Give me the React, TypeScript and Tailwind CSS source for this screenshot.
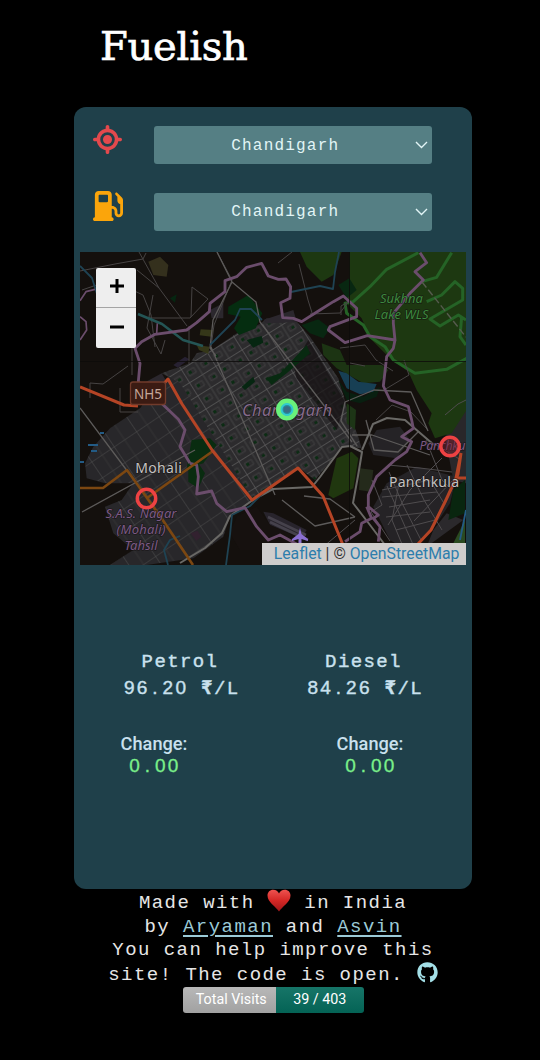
import type { ReactNode } from "react";
import { FaGithub } from "react-icons/fa";
import { FaGasPump, FaLocationCrosshairs } from "react-icons/fa6";

const MONO = "font-['Liberation_Mono',monospace]";

function CitySelect({ icon, city }: { icon: ReactNode; city: string }) {
  return (
    <div className="flex h-[38px] items-start">
      <div className="w-[60.5px]">{icon}</div>
      <button className="flex h-[38px] w-[278.5px] items-center justify-center rounded-[3px] bg-[#557f84] pr-1 text-[#e2f5f6]">
        <span className={`${MONO} grow pt-px pl-[2px] text-center text-[16px] tracking-[1.2px]`}>{city}</span>
        <svg width="13" height="8" viewBox="0 0 13 8" fill="none" stroke="currentColor" strokeWidth="1.4">
          <path d="M1 1 6.5 6.6 12 1" />
        </svg>
      </button>
    </div>
  );
}

function CityMap() {
  return (
    <svg className="block" width="386" height="313" viewBox="80 252 386 313" fill="none" strokeLinejoin="round">
      <defs>
        <pattern id="blocks" width="31" height="15.500" patternUnits="userSpaceOnUse" patternTransform="translate(207 353) rotate(-32)">
          <path d="M0 0H31M0 0V15.500" stroke="#5c5b5c" strokeWidth="1.400" />
          <path d="M16 0V15.500" stroke="#4a494a" strokeWidth=".8" />
          <path d="M4 5h8v5.500H4zM20 5h7v5.500h-7z" stroke="#464547" strokeWidth=".7" />
          <path d="M5 6h3v3H5zM23 7h3v2.500h-3z" fill="#0a2c12" />
        </pattern>
        <pattern id="suburb" width="27" height="19" patternUnits="userSpaceOnUse" patternTransform="translate(103 431) rotate(-34)">
          <path d="M0 0H27M0 0V19" stroke="#4c4b4c" strokeWidth="1.1" />
          <path d="M13 0V19" stroke="#3a393a" strokeWidth=".7" />
        </pattern>
      </defs>
      <rect x="80" y="252" width="386" height="313" fill="#14100d" />

      <g transform="translate(80 250) scale(.33333)">
        {/* built-up areas */}
        <path id="west" d="M15 640 40 590 90 535 180 475 265 380 310 400 520 750 450 800 430 860 340 925 200 945 90 945 160 900 100 850 75 770 125 750 160 700 75 700 20 685Z" fill="#28272a" />
        <path d="M15 640 40 590 90 535 180 475 265 380 310 400 520 750 450 800 430 860 340 925 200 945 90 945 160 900 100 850 75 770 125 750 160 700 75 700 20 685Z" />
        <path d="M245 370 330 340 350 310 395 300 470 250 540 222 560 205 650 215 690 260 775 385 800 470 835 560 845 595 790 588 705 690 655 652 520 750 300 400Z" fill="#2c2b2d" />
        <path d="M390 180 430 160 430 205 395 205ZM550 210 640 180 650 215 560 220ZM190 400 245 370 260 395 215 420Z" fill="#2b272d" />
        <path d="M865 580 890 540 960 530 990 570 950 625 880 615ZM880 770 920 700 1010 650 1130 680 1110 760 1050 850 980 900 930 870Z" fill="#252326" />
        <path d="M1095 560 1160 470V700L1120 690Z" fill="#29272a" />
        <path d="M1060 840 1100 790 1150 810 1040 890Z" fill="#2b292c" />
        <path d="M550 785 580 790 680 840 665 865 570 825Z" fill="#28242c" />
      </g>
      <path d="M85 463 93 447 110 428 140 408 168 377 183 383 253 500 230 517 223 537 193 558 147 565H110L133 550 113 533 105 507 122 500 133 483 105 483 87 478Z" fill="url(#suburb)" />
      <path d="M162 373 190 363 197 353 212 350 237 333 260 324 297 322 310 337 338 378 347 407 358 437 361 448 343 446 315 480 298 467 253 500 180 383Z" fill="url(#blocks)" />

      <g transform="translate(80 250) scale(.33333)">
        <path d="m640 345 45-75 110 185-25 85-120-155z" fill="#151112" opacity=".7" />

        {/* forest and parks */}
        <path d="M660 6 680 50 725 95 760 75 785 6ZM808 6H1160V480L1115 550 1065 565 1045 520 1055 490 1010 420 985 365 930 325 870 265 845 205 805 165 800 130 808 90Z" fill="#1d3811" />
        <path d="M725 280 780 300 800 345 905 345 925 360 900 395 850 400 770 355 730 315Z" fill="#1c3413" />
        <path d="M665 225 715 208 750 235 730 265 690 250ZM775 105 808 85 830 120 800 145Z" fill="#082711" />
        <path d="M558 385 600 370 680 285 690 310 620 370 575 405Z" fill="#082a11" />
        <path d="M775 390 800 425 850 440 900 410 890 440 840 460 800 450Z" fill="#081f10" />
        <path d="M775 362 800 370 835 395 890 402 880 425 840 433 800 415Z" fill="#173f54" />
        <path d="m800 460 28 20-3 60-25-20z" fill="#1d3516" />
        <g stroke="#256326" strokeWidth="9">
          <path d="M1015 8 920 58 870 110 820 155 795 160 800 190 850 225 870 260 915 290 940 330 1005 370 1100 358 1160 325" />
          <path d="M1115 8 1070 82 1025 95M1040 155 1085 135 1125 95 1148 115 1148 150 1050 207 1080 228 1135 195 1158 210M1158 285 1140 260 1145 200" />
        </g>
        <path d="m445 170 60-35 42 55-20 45-50 20-15-20 20-35-38-8z" fill="#052d10" />
        <path d="m205 35 35-15 25 25-5 35-40-5z" fill="#34301d" />
        <path d="m362 238 38 2-6 20-35-4zM350 285l38 5-3 22-28-12z" fill="#353719" />
        <path d="m270 145 20-12-5 25zM500 270l45-12 5 20-30 15zM485 410l35-30 5 15-30 25z" fill="#062611" />
        <path d="m280 345 35-25 13 8-35 25z" fill="#272131" />
        <path d="m335 570 55-5 20 20-40 55-50 15zM325 620l30 20 20 30-20 45-30-20z" fill="#092c10" />
        <path d="m332 850 20-8 12 18-15 12z" fill="#32212f" />
        <path d="M470 800 530 770 570 825 650 860 640 900H480L450 850Z" fill="#16110f" />
        <path d="m770 625 45-20 20 20-15 90-60 30-15-10z" fill="#20370f" />
        <path d="m840 655 40 5-8 65-35-5z" fill="#242a1b" />
        <path d="m1120 720 35-30v100l-50 20z" fill="#09260f" />
        <path d="m1120 880 35-70v70z" fill="#2a4a20" />
      </g>

      {/* minor roads */}
      <g stroke="#464343" strokeWidth="1">
        <path d="M139 252 159 288 187 326M217 252 232 280 214 325 211 347M80 271 115 264 143 259 146 253M148 318H190L208 299 192 287 191 317M159 288 137 270M82 290 111 280 143 295 151 315 155 347M132 330v45M189 326v38M90 383 103 384 128 366M90 383V398M120 388v24h18M153 295 147 328 161 354 165 340M299 264 308 300 313 316M292 252 278 263M310 314 340 313 348 302 341 306V315M340 348 365 345 376 360 393 371M384 390 409 375 404 360M376 420 392 405 411 412 427 429M350 363 365 366" />
      </g>
      <g stroke="#5d5b5a" strokeWidth="1.3">
        <path d="M217 252 232 282 213 320 210 348 216 356M232 282 256 302 260 322 352 442M211 347 275 495M80 408 134 480M82 512 195 450" />
        <path d="M355 517 330 499 304 496M282 500 315 526 355 517M357 446 341 421 345 402 374 390 411 392 428 431M352 435H372L430 455M366 420 374 450 398 452 418 432" />
      </g>
      <g stroke="#4f4c4e" strokeWidth="1">
        <path d="M382 490 430 480 445 505M389 507 430 500M396 530 435 520M389 472 403 505 421 540M407 465 424 500 442 530M426 440 442 480 452 490M387 486 415 549M372 480 382 505 371 512 390 541M442 458 410 490 388 525M455 478 414 521M388 465 420 468 452 472M400 478 392 520 404 549M382 497 437 492M386 517 430 512M428 440 461 460M445 415 458 404 466 400M303 564 355 520" />
      </g>
      <path d="M180 563 205 548 222 533 230 516 253 500 273 489 312 487 320 477 342 447 350 446 362 452 358 476 353 503 370 525 385 545M362 450 373 424 387 418 405 420 434 445" stroke="#6a6966" strokeWidth="2" />
      <path d="m268 517 38 18m-36-13 38 18" stroke="#45414b" strokeWidth="2.500" />

      {/* water */}
      <g stroke="#1f4353" strokeWidth="1.8">
        <path d="M80 266 92 278 97 294M210 345 235 320 240 309 251 309 262 320M291 292 320 286 333 289 335 272 339 252M226 565 230 535 232 515 250 506 264 492M168 565 164 550 170 540 180 536" />
        <path d="M138 314 162 324 183 340 203 346" stroke="#245555" strokeWidth="2.500" />
        <path d="M88 445h10M91 451h6M80 462h4M100 433h4M466 510l-6 30" stroke="#235b85" />
      </g>

      {/* district boundaries */}
      <g transform="translate(80 250) scale(.33333)" stroke="#6b4d6c" strokeWidth="8.500">
        <path d="M330 640 300 590 315 540 295 508 250 465 175 395 180 340 165 295 185 275 225 253 320 240 350 218 388 185 390 160 435 125 435 92 470 80 500 52 545 40 565 78 595 88 618 87 632 110 630 145 602 158 608 203 640 205 665 215 720 180 760 155 790 138 830 175 830 200 750 230 745 240 795 278 862 257 945 270 940 220 940 190 990 130 1030 90 1005 65 1040 38 1020 8" />
        <path d="M945 270 940 295 920 320 910 408 930 450 985 470 995 510 1000 535 965 560 995 575 980 605 945 630 890 680 865 735 865 770 895 795 880 805 900 830 895 875M330 640 350 645 355 680 350 732 395 723 410 760 440 785 495 773 530 830 565 870 600 855 655 885M795 875 840 845 845 820 875 805 860 770" />
        <path d="M0 152 18 125 45 118M0 270 20 240 18 215 0 200M232 220 230 250" strokeWidth="5" />
      </g>
      <path d="M422 282 466 337" stroke="#565b4e" strokeDasharray="7 3" strokeWidth="1.4" />

      {/* main roads */}
      <path d="M80 488H103L127 470 147 498 162 519 193 565M147 498 213 451" stroke="#7c4711" strokeWidth="2.600" />
      <path d="M80 387 124 405 138 406M160 388 168 379 182 404 212 450 252 500 298 468 323 496 343 545M417 545 431 530 445 502 458 474 461 453M466 478H456L461 453" stroke="#b54425" strokeWidth="3" />
      <path d="M349.500 252V543M80 361.500H466" stroke="#0c0b0a" strokeWidth=".8" />

      {/* labels */}
      <rect x="130.500" y="382" width="35" height="22.500" rx="2.500" fill="#3b1b13" stroke="#713b2b" strokeWidth="1.3" />
      <g fontFamily="'Noto Sans', sans-serif" textAnchor="middle" stroke="#151112" strokeWidth="1.500" strokeOpacity=".7" paintOrder="stroke">
        <text x="148" y="398.500" fontSize="13.500" fill="#c5a799" stroke="none">NH5</text>
        <g fill="#3c8a3e" fontStyle="italic" fontSize="13">
          <text x="401.500" y="303" textLength="43">Sukhna</text>
          <text x="401.500" y="318.500" textLength="54">Lake WLS</text>
        </g>
        <text x="287" y="415.500" fontSize="16.500" fontStyle="italic" fill="#846a8a" textLength="90">Chandigarh</text>
        <text x="158.500" y="472.500" fontSize="14" fill="#c4c2c1" textLength="46.500">Mohali</text>
        <text x="424" y="487" fontSize="14" fill="#c4c2c1" textLength="70">Panchkula</text>
        <g fontStyle="italic" fontSize="13" fill="#7c5a85">
          <text x="141" y="518" textLength="71">S.A.S. Nagar</text>
          <text x="141" y="533.500" textLength="49">(Mohali)</text>
          <text x="141" y="549.500" textLength="33">Tahsil</text>
          <text x="442.500" y="450" fontSize="12.500" textLength="46">Panchku</text>
        </g>
      </g>
      <path d="m300 528 1.500 6 6.500 5v2l-6.500-2v4l2 2-3.500-1-3.500 1 2-2v-4l-6.500 2v-2l6.500-5z" fill="#8a6fd0" />

      {/* station markers */}
      <circle cx="287" cy="409.500" r="8.500" fill="#278c9c" stroke="#69f17b" strokeWidth="5" />
      <circle cx="287" cy="409.500" r="5.500" stroke="#31cbd0" strokeWidth="2" />
      <circle cx="287" cy="409.500" r="3.300" fill="#386d85" />
      <circle cx="146.500" cy="498.500" r="9.200" stroke="#ee4243" strokeWidth="3.500" />
      <circle cx="450" cy="446.500" r="9.200" fill="#77213088" stroke="#ee4243" strokeWidth="3.500" />
    </svg>
  );
}

function Digits({ whole, fraction }: { whole: string; fraction: string }) {
  return (
    <span className="font-['Liberation_Sans',sans-serif] text-[19px] tracking-[2.3px]">
      {whole}
      <span className="inline-block w-[12.8px] text-center">.</span>
      {fraction}
    </span>
  );
}

function FuelPrice({ name, whole, fraction }: { name: string; whole: string; fraction: string }) {
  return (
    <div className={`${MONO} w-[116px] text-center text-[19px] leading-[25px] tracking-[1.4px] text-[#c9e1ee] [-webkit-text-stroke:0.4px_#c9e1ee]`}>
      <div>{name}</div>
      <div className="pl-[2px] whitespace-nowrap">
        <Digits whole={whole} fraction={fraction} /> <b>₹</b>/L
      </div>
    </div>
  );
}

function PriceChange() {
  return (
    <div className="w-[70px] text-center text-[#c9e1ee]">
      <div className="text-[18.200px] leading-[22px] font-medium">Change:</div>
      <div className="pl-[2px] leading-[22px] text-[#7bf08a] [-webkit-text-stroke:0.3px_#7bf08a]">
        <Digits whole="0" fraction="00" />
      </div>
    </div>
  );
}

function Heart() {
  return (
    <svg className="-mt-1 inline-block" width="24" height="23" viewBox="0 0 24 23">
      <defs>
        <linearGradient id="heart" x1="0" y1="0" x2="0" y2="1">
          <stop offset="0" stopColor="#ee5350" />
          <stop offset=".5" stopColor="#d52725" />
          <stop offset="1" stopColor="#9f1719" />
        </linearGradient>
      </defs>
      <path d="M12 22.500C9 17.500.500 13.500.500 6.500.500 3 3 .700 6.200.700 9 .700 11 2.300 12 4.500 13 2.300 15 .700 17.800.700 21 .700 23.500 3 23.500 6.500 23.500 13.500 15 17.500 12 22.500Z" fill="url(#heart)" />
    </svg>
  );
}

export default function App() {
  return (
    <div className="flex h-[1060px] w-[540px] flex-col bg-black font-[Roboto,sans-serif]">
      <header className="h-[107px] pt-[22px] pl-[100px]">
        <h1 className="font-['DejaVu_Serif',serif] text-[40px] leading-[48px] tracking-[-0.2px] text-white [-webkit-text-stroke:0.7px_white]">Fuelish</h1>
      </header>

      <main className="ml-[74px] flex h-[782px] w-[398px] flex-col rounded-xl bg-[#1f404a]">
        <div className="flex h-[145px] flex-col gap-[28.5px] pt-[19px] pl-[19px]">
          <CitySelect city="Chandigarh" icon={<FaLocationCrosshairs className="-mt-[1.5px] size-[29px] text-[#e3494d]" />} />
          <CitySelect city="Chandigarh" icon={<FaGasPump className="-mt-0.5 size-[30px] text-[#fba50b]" />} />
        </div>

        <div className="relative ml-1.5 h-[313px] w-[386px] overflow-hidden">
          <CityMap />
          <div className="absolute top-4 left-4 flex w-10 flex-col overflow-hidden rounded-[2px] bg-[#eeeeee] text-black">
            {["M8 1v14M1 8h14", "M1 8h14"].map((d, i) => (
              <button key={d} className={`flex h-10 items-center justify-center pb-[3px] pl-0.5 ${i ? "" : "border-b border-[#a4a4a4]"}`}>
                <svg width="16" height="16" viewBox="0 0 16 16" stroke="currentColor" strokeWidth="3">
                  <path d={d} />
                </svg>
              </button>
            ))}
          </div>
          <div className="absolute right-0 bottom-0 flex h-[22px] w-[204px] items-center justify-end bg-[#cfcdcc] pr-[6.5px] text-[15.800px] whitespace-pre text-[#333]">
            <span className="text-[#2d7eac]">Leaflet</span>
            <span> | © </span>
            <span className="text-[#2d7eac]">OpenStreetMap</span>
          </div>
        </div>

        <div className="mt-[85px] flex gap-[67.5px] pl-12">
          <FuelPrice name="Petrol" whole="96" fraction="20" />
          <FuelPrice name="Diesel" whole="84" fraction="26" />
        </div>
        <div className="mt-[31px] flex gap-[146px] pl-[45px]">
          <PriceChange />
          <PriceChange />
        </div>
      </main>

      <footer className="ml-[74px] flex w-[398px] flex-col items-center">
        <div className={`${MONO} flex flex-col items-center text-[19px] tracking-[1.45px] whitespace-pre text-[#e6e6e6]`}>
          <div className="h-[26px] leading-[29px]">Made with <Heart /> in India</div>
          <div className="h-[23px] leading-[25px]">
            by <a className="text-[#9bcad7] underline decoration-[1.5px] underline-offset-[3px]">Aryaman</a> and{" "}
            <a className="text-[#9bcad7] underline decoration-[1.5px] underline-offset-[3px]">Asvin</a>
          </div>
          <div className="h-[24px] leading-[24px]">You can help improve this</div>
          <div className="flex h-[25px] items-center leading-[24px]">
            site! The code is open. <FaGithub className="-mt-[5px] size-[21px] text-[#a3dfe7]" />
          </div>
        </div>
        <div className="flex h-[26px] w-[181px] overflow-hidden rounded-[3px] text-[14.3px] text-white">
          <div className="flex w-[93.5px] items-center justify-center bg-linear-to-b from-[#b8b8b8] to-[#a1a1a1] pl-1">Total Visits</div>
          <div className="flex grow items-center justify-center bg-linear-to-b from-[#167568] to-[#046355]">39 / 403</div>
        </div>
      </footer>
    </div>
  );
}
